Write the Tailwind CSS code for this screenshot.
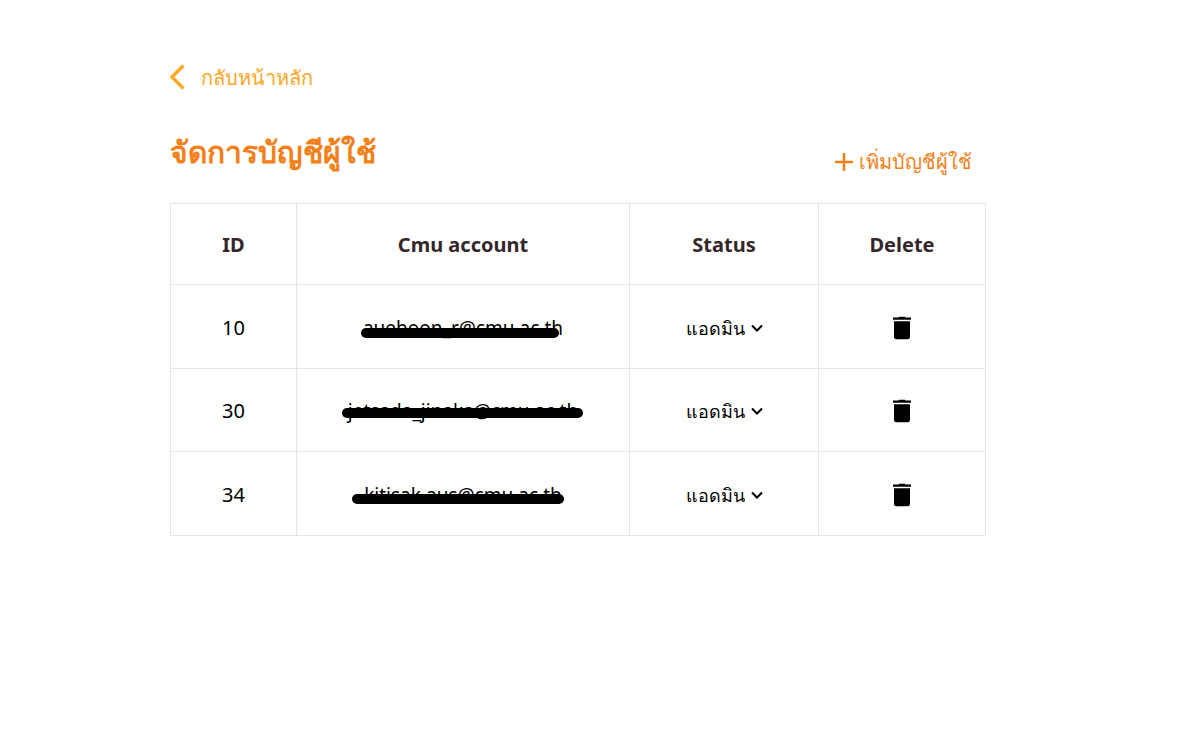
<!DOCTYPE html>
<html lang="th">
<head>
<meta charset="utf-8">
<meta name="viewport" content="width=device-width, initial-scale=1">
<title>จัดการบัญชีผู้ใช้</title>
<script src="https://cdn.jsdelivr.net/npm/@tailwindcss/browser@4"></script>
</head>
<body class="bg-white font-['Noto_Sans','DejaVu_Sans',sans-serif] text-xl text-black">
<main class="ml-[170px] mr-8 max-w-[816px] pt-16">
  <a href="#" class="flex w-fit items-start gap-4 text-[#ffa726]">
    <svg class="h-[26px] w-[15px]" viewBox="0 0 15 26" fill="none" stroke="currentColor" stroke-width="3.4"><path d="M13.5 1.5 2 13l11.500 11.500"/></svg>
    <span class="leading-7">กลับหน้าหลัก</span>
  </a>
  <div class="flex justify-between pt-9">
    <h1 class="text-[30px] leading-12 font-bold text-[#f57f17]">จัดการบัญชีผู้ใช้</h1>
    <button type="button" class="mt-5 mr-3.5 flex items-center gap-1.5 text-[#f57f17]">
      <svg class="size-[18px]" viewBox="0 0 18 18" fill="none" stroke="currentColor" stroke-width="2.5"><path d="M9 0v18M0 9h18"/></svg>
      <span class="leading-7">เพิ่มบัญชีผู้ใช้</span>
    </button>
  </div>
  <table class="mt-[27px] w-full table-fixed border-collapse text-center">
    <colgroup><col class="w-[126px]"><col class="w-[333px]"><col class="w-[189px]"><col class="w-[167px]"></colgroup>
    <thead>
      <tr class="h-[81px] text-[#33272a]">
        <th scope="col" class="border border-[#e5e5e5] pt-0.5">ID</th>
        <th scope="col" class="border border-[#e5e5e5] pt-0.5">Cmu account</th>
        <th scope="col" class="border border-[#e5e5e5] pt-0.5">Status</th>
        <th scope="col" class="border border-[#e5e5e5] pt-0.5">Delete</th>
      </tr>
    </thead>
    <tbody>
      <tr class="h-[84px]">
        <td class="border border-[#e5e5e5] pt-0.5">10</td>
        <td class="relative border border-[#e5e5e5] pt-1 text-[19px]">aueboon_r@cmu.ac.th<span class="absolute top-[43px] left-16 h-2.5 w-[198px] rounded-full bg-black"></span></td>
        <td class="border border-[#e5e5e5] pt-0.5"><div class="flex items-center justify-center gap-1.5"><select aria-label="Status 10" class="-mr-5 appearance-none bg-transparent pr-5 text-lg"><option>แอดมิน</option></select><svg class="pointer-events-none h-2 w-3" viewBox="0 0 12 8" fill="none" stroke="currentColor" stroke-width="2"><path d="m1 1.500 5 5 5-5"/></svg></div></td>
        <td class="border border-[#e5e5e5] pt-0.5"><button type="button" aria-label="Delete 10" class="mx-auto block"><svg class="h-6 w-[18px]" viewBox="0 0 18 24"><path d="M5.5 1.5Q5.5.8 6.5.8h5q1 0 1 .7H18v2.3H0V1.500ZM1 5.300h16V21q0 2.300-2.300 2.300H3.300Q1 23.300 1 21Z"/></svg></button></td>
      </tr>
      <tr class="h-[83px]">
        <td class="border border-[#e5e5e5] pt-0.5">30</td>
        <td class="relative border border-[#e5e5e5] pt-0.5 text-[19px]">jetsada_jinaka@cmu.ac.th<span class="absolute top-[39px] left-[45px] h-2.5 w-[241px] rounded-full bg-black"></span></td>
        <td class="border border-[#e5e5e5] pt-0.5"><div class="flex items-center justify-center gap-1.5"><select aria-label="Status 30" class="-mr-5 appearance-none bg-transparent pr-5 text-lg"><option>แอดมิน</option></select><svg class="pointer-events-none h-2 w-3" viewBox="0 0 12 8" fill="none" stroke="currentColor" stroke-width="2"><path d="m1 1.500 5 5 5-5"/></svg></div></td>
        <td class="border border-[#e5e5e5] pt-0.5"><button type="button" aria-label="Delete 30" class="mx-auto block"><svg class="h-6 w-[18px]" viewBox="0 0 18 24"><path d="M5.5 1.5Q5.5.8 6.5.8h5q1 0 1 .7H18v2.3H0V1.500ZM1 5.300h16V21q0 2.300-2.300 2.300H3.300Q1 23.300 1 21Z"/></svg></button></td>
      </tr>
      <tr class="h-[84px]">
        <td class="border border-[#e5e5e5] pt-0.5">34</td>
        <td class="relative border border-[#e5e5e5] pt-1 text-[19px]">kitisak.aus@cmu.ac.th<span class="absolute top-[42px] left-[55px] h-2.5 w-[212px] rounded-full bg-black"></span></td>
        <td class="border border-[#e5e5e5] pt-0.5"><div class="flex items-center justify-center gap-1.5"><select aria-label="Status 34" class="-mr-5 appearance-none bg-transparent pr-5 text-lg"><option>แอดมิน</option></select><svg class="pointer-events-none h-2 w-3" viewBox="0 0 12 8" fill="none" stroke="currentColor" stroke-width="2"><path d="m1 1.500 5 5 5-5"/></svg></div></td>
        <td class="border border-[#e5e5e5] pt-0.5"><button type="button" aria-label="Delete 34" class="mx-auto block"><svg class="h-6 w-[18px]" viewBox="0 0 18 24"><path d="M5.5 1.5Q5.5.8 6.5.8h5q1 0 1 .7H18v2.3H0V1.500ZM1 5.300h16V21q0 2.300-2.300 2.300H3.300Q1 23.300 1 21Z"/></svg></button></td>
      </tr>
    </tbody>
  </table>
</main>
</body>
</html>
